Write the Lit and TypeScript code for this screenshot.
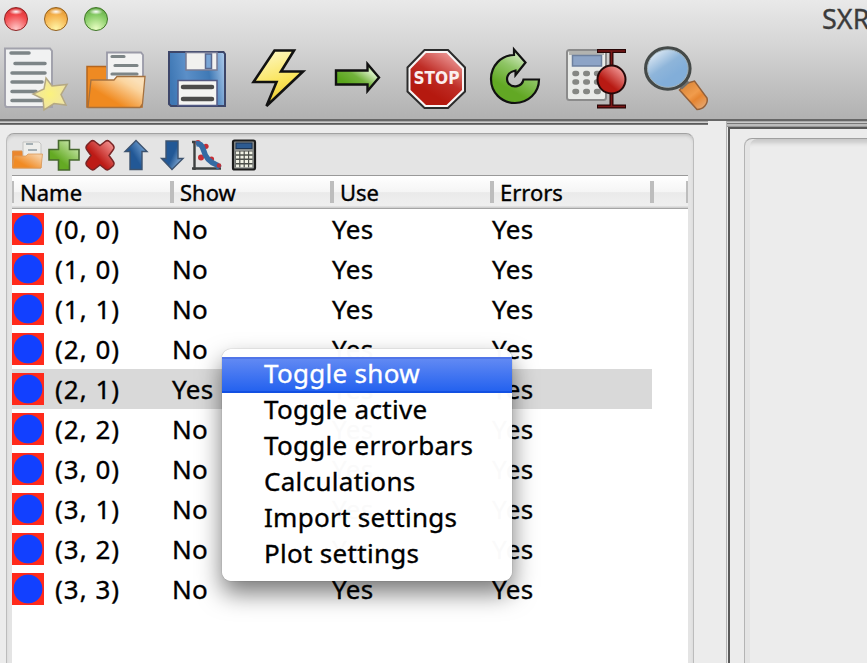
import { LitElement, html, css, svg } from "lit";
import { customElement } from "lit/decorators.js";

const ink = "#111";

// Toolbar glyphs share one coordinate space: slot n covers x from 80n to 80n+80, y from 40 to 116.
const toolIcons = [
  svg`<path d="M5 48.500H50L52 51V107H6L5 105Z" fill="#f1f2f2" stroke="#a2a2ac" stroke-width="2"/>
    <path d="M11 53H29M15 63.500H45M12 73H45M12 82H42M12 91.500H36M12 100.500H42" stroke="#7d8587" stroke-width="3.500" stroke-linecap="round"/>
    <path d="M46 78L52 86L67 84.500L61 94.500L66 105L54 103.500L44 110L43 99L33 94L44 89Z" fill="url(#star)" stroke="#b4a883" stroke-width="1.500"/>`,
  svg`<path d="M87 107V66.500H106L110 71H142V107Z" fill="#ee8a22" stroke="#b5651d" stroke-width="1.500"/>
    <path d="M107 52.500H141L143 55V92H107Z" fill="#f3f3f3" stroke="#9a9aa8" stroke-width="1.800"/>
    <path d="M112 56.500H124M115 65.500H137M112 74H137" stroke="#7d8587" stroke-width="3.200" stroke-linecap="round"/>
    <path d="M91 80H114L117 76.500H145L142.500 104L140 107.500H88Z" fill="url(#folder)" stroke="#a5713f" stroke-width="1.300"/>`,
  svg`<path d="M169 52H223.500L225 54V106H171L169 104Z" fill="url(#disk)" stroke="#3d4669" stroke-width="2"/>
    <rect x="186" y="52.500" width="31" height="17.500" fill="#f1f1ef" stroke="#777b94" stroke-width="1.500"/>
    <rect x="205.500" y="54" width="6" height="14.500" fill="#79a5d6" stroke="#59688e" stroke-width="1.500"/>
    <rect x="178" y="80.500" width="39" height="25" fill="#f4f4f2" stroke="#535a84" stroke-width="1.500"/>
    <path d="M183 87H212M183 99H212" stroke="#4c4c4b" stroke-width="4.500" stroke-linecap="round"/>`,
  svg`<path d="M274.500 50.500H294L281 71.500H303L266.500 106L276.500 82H253.500Z" fill="url(#bolt)" stroke="${ink}" stroke-width="2.600"/>`,
  svg`<path d="M336 70.500H367.500V64L379 77.500L367.500 91V84.500H336Z" fill="url(#greenH)" stroke="${ink}" stroke-width="2.400"/>`,
  svg`<path d="M424.500 50H448L465 67.500V91.500L448 108H424.500L407.500 91.500V67.500Z" fill="#f7f4f4" stroke="#2b2b2b" stroke-width="2"/>
    <path d="M426 53H446.500L462 69V90L446.500 105H426L410.500 90V69Z" fill="url(#stop)"/>
    <text x="436.500" y="84" class="stop" textLength="46" lengthAdjust="spacingAndGlyphs">STOP</text>`,
  svg`<path d="M514 49.500L525.500 62.500L515.500 75V70.500C508 72 505 78 508.500 83.500C513 88.500 522 87 523.500 79.500H539C539 93 528 103 515 103C501 103 491 92 491 79C491 66 501 55 514 55Z" fill="url(#green)" stroke="${ink}" stroke-width="2.200"/>`,
  svg`<rect x="567" y="50" width="39" height="50" rx="2.500" fill="#e9ebe8" stroke="#8b8b8b" stroke-width="2"/>
    <path d="M569 53H604" stroke="#b2b3b0" stroke-width="4"/>
    <rect x="572.500" y="55.500" width="29" height="10.500" fill="#8da4c6" stroke="#6d809e" stroke-width="1.500"/>
    <path d="M573 73.500H603M573 82H603M573 91.500H603" stroke="#858783" stroke-width="5.500" stroke-linecap="round" stroke-dasharray="1.500 9.300" transform="translate(2 0)"/>
    <path d="M597 51H626M611.500 51V107M597 106.500H626" stroke="#280707" stroke-width="4"/>
    <path d="M598 51H625M611.500 51V107M598 106.500H625" stroke="#7b1717" stroke-width="1.600"/>
    <circle cx="611.500" cy="79.500" r="14" fill="url(#ball)" stroke="#260909" stroke-width="2"/>`,
  svg`<path d="M686 83.500L694.500 81L707 98C708.500 104 703 109.500 697 109.500L679.500 90Z" fill="url(#handle)" stroke="#946039" stroke-width="1.500"/>
    <path d="M681 88.500L688.500 81.500" stroke="#70716f" stroke-width="3"/>
    <ellipse cx="667.800" cy="68.500" rx="22" ry="20.500" fill="url(#lens)" stroke="#454a49" stroke-width="3.600"/>
    <ellipse cx="667.800" cy="68.500" rx="20.300" ry="18.800" fill="none" stroke="#a3b4bd" stroke-width="1"/>`,
];

// Panel glyphs: slot n covers x from 10+36n, y from 137 to 173.
const panelIcons = [
  svg`<path d="M12.500 168V151H22L24 155H41V168Z" fill="#eb862d" stroke="#dc934f"/>
    <path d="M23 142H39L41 144V158H23Z" fill="#eeeeeb" stroke="#c4c4c2"/><path d="M26 144H33M28 150H37" stroke="#8d9ba1" stroke-width="1.500"/>
    <path d="M14.500 156H26L28 154H42.500L41 168H12.500Z" fill="url(#folderS)" stroke="#d99a5c" stroke-width=".8"/>`,
  svg`<path d="M58.500 140.500H69.500V149.500H79V160H69.500V170H58.500V160H49V149.500H58.500Z" fill="url(#greenP)" stroke="#47682f" stroke-width="1.600"/>`,
  svg`<path d="M90.500 141.500Q93 139.500 95.500 142L100 145.500L104.500 142Q107 139.500 109.500 141.500L113 145Q115 147.500 113 150L109 155.500L113 161Q115 163.500 113 166L109.500 169Q107 171 104.500 168.500L100 165L95.500 168.500Q93 171 90.500 169L87 166Q85 163.500 87 161L91 155.500L87 150Q85 147.500 87 145Z" fill="url(#redX)" stroke="#7a2525" stroke-width="1.500"/>`,
  svg`<path d="M136 140.500L147 151.500H142V169.500H130V151.500H125Z" fill="url(#blueUp)" stroke="#3d536f" stroke-width="1.400"/>`,
  svg`<path d="M172 169.500L161.500 158.500H166V141H178V158.500H183Z" fill="url(#blueDn)" stroke="#3d536f" stroke-width="1.400"/>`,
  svg`<path d="M194.500 141V170M192 168.500H221M192 142H197" fill="none" stroke="#3d4141" stroke-width="2.400"/>
    <g fill="#c62f35"><circle cx="206" cy="146.300" r="2.600"/><circle cx="201" cy="157.500" r="3"/><circle cx="211.500" cy="159" r="2.600"/><circle cx="198" cy="142.500" r="2.600"/></g>
    <path d="M196 144Q201.500 142.500 203.500 150Q206 161 217 165L219.500 168" fill="none" stroke="#356ba3" stroke-width="5.500"/>
    <circle cx="219" cy="165.500" r="2.300" fill="#b8313c"/>`,
  svg`<rect x="233" y="140.500" width="22" height="29" rx="1.500" fill="#8b8e8c" stroke="#1c1c1c" stroke-width="2.200"/>
    <rect x="236" y="143" width="16" height="5.500" fill="#2d5b91" stroke="#1c3554"/>
    <rect x="235.500" y="151" width="17" height="16" fill="#4c4f4a"/>
    <path d="M236 152.800H253M236 157.200H253M236 161.500H253M236 165.800H253" stroke="#f0f1e4" stroke-width="2.800" stroke-dasharray="3.200 1.200"/>`,
];

const stops = (...list: [number, string][]) =>
  list.map(([o, c]) => svg`<stop offset=${o} stop-color=${c} />`);

const gradients = svg`<defs>
  <radialGradient id="star">${stops([0, "#fbf27d"], [1, "#efe4a4"])}</radialGradient>
  <linearGradient id="folder" x1=".45" y1=".8" x2="1" y2=".3">${stops([0, "#f08a20"], [0.75, "#fbd5a0"], [1, "#fbe0b8"])}</linearGradient>
  <linearGradient id="folderS" x1=".4" y1=".8" x2="1" y2=".3">${stops([0, "#f18b24"], [1, "#f6cda0"])}</linearGradient>
  <linearGradient id="disk" x1="0" y1=".4" x2="1" y2=".25">${stops([0, "#3e77b4"], [0.3, "#5b8fc8"], [0.7, "#3f79b5"], [1, "#a5c5e8"])}</linearGradient>
  <linearGradient id="bolt" x1=".2" y1="0" x2=".5" y2="1">${stops([0, "#fdf8c8"], [0.6, "#fae45a"], [1, "#e8c52d"])}</linearGradient>
  <linearGradient id="greenH" x1=".3" y1=".8" x2=".95" y2=".2">${stops([0, "#5aa61c"], [0.4, "#73b33d"], [0.8, "#d4edc0"], [1, "#9ccc77"])}</linearGradient>
  <linearGradient id="stop" x1=".35" y1=".75" x2=".8" y2="0">${stops([0, "#b5190f"], [0.4, "#bf2d26"], [1, "#ee9b9a"])}</linearGradient>
  <linearGradient id="green" x1=".3" y1=".7" x2=".65" y2="0">${stops([0, "#62a824"], [0.5, "#8fc566"], [1, "#e3f3d7"])}</linearGradient>
  <linearGradient id="ball" x1=".4" y1=".65" x2=".85" y2=".1">${stops([0, "#b81a13"], [1, "#f29a98"])}</linearGradient>
  <linearGradient id="lens" x1=".15" y1=".1" x2=".6" y2=".7">${stops([0, "#e0ebf5"], [0.6, "#8eb5da"], [1, "#82aed9"])}</linearGradient>
  <linearGradient id="handle" x1=".1" y1=".2" x2=".7" y2="1">${stops([0, "#dc883b"], [0.45, "#f19c4c"], [0.65, "#e68531"], [1, "#e6a368"])}</linearGradient>
  <linearGradient id="greenP" x1=".4" y1=".7" x2=".9" y2=".1">${stops([0, "#64aa23"], [1, "#cbe8ae"])}</linearGradient>
  <linearGradient id="redX" x1=".4" y1=".6" x2=".9" y2=".1">${stops([0, "#bd1b16"], [1, "#f18d8b"])}</linearGradient>
  <linearGradient id="blueUp" x1=".4" y1=".5" x2=".9" y2=".1">${stops([0, "#225896"], [1, "#7aa8d8"])}</linearGradient>
  <linearGradient id="blueDn" x1=".4" y1=".7" x2=".9" y2="1">${stops([0, "#225896"], [1, "#a5c6e8"])}</linearGradient>
</defs>`;

const rows: [string, string][] = [
  ["(0, 0)", "No"], ["(1, 0)", "No"], ["(1, 1)", "No"], ["(2, 0)", "No"], ["(2, 1)", "Yes"],
  ["(2, 2)", "No"], ["(3, 0)", "No"], ["(3, 1)", "No"], ["(3, 2)", "No"], ["(3, 3)", "No"],
];
const menuItems = ["Toggle show", "Toggle active", "Toggle errorbars", "Calculations", "Import settings", "Plot settings"];

@customElement("app-root")
class AppRoot extends LitElement {
  static styles = css`
    :host { display: block; position: relative; width: 867px; height: 663px; overflow: hidden; background: #ececec; color: #000; font-family: "Noto Sans", "Open Sans", sans-serif; -webkit-text-stroke: 0.35px; }
    svg { display: block; flex: none; }
    .window { display: flex; flex-direction: column; height: 663px; }
    .chrome { box-sizing: border-box; flex: none; height: 121px; background: linear-gradient(#e9e9e9, #d5d5d5 38%, #b2b2b2 98%); border-bottom: 2px solid #666; }
    .titlebar { display: flex; align-items: center; height: 40px; padding-left: 4px; gap: 16px; }
    .light { box-sizing: border-box; flex: none; width: 24px; height: 24px; margin-bottom: 2px; border-radius: 50%; border: 1.500px solid; }
    .light.red { border-color: #8f2323; background: radial-gradient(ellipse 7px 3px at 50% 17%, #fff, #fff0), radial-gradient(circle at 50% 95%, #ffc9c9, #f1494c 60%, #c9292d); }
    .light.amber { border-color: #94601c; background: radial-gradient(ellipse 7px 3px at 50% 17%, #fff, #fff0), radial-gradient(circle at 50% 95%, #fff6a8, #f5b14b 60%, #cf8426); }
    .light.green { border-color: #3f7626; background: radial-gradient(ellipse 7px 3px at 50% 17%, #fff, #fff0), radial-gradient(circle at 50% 95%, #eaffc4, #85cb64 60%, #55993a); }
    .title { margin-left: 698px; margin-top: -2px; font-size: 27px; line-height: 40px; color: #3b3b3b; white-space: nowrap; }
    .tools { display: flex; }
    .stop { font: bold 17px "DejaVu Sans", sans-serif; fill: #fbeeee; stroke: none; text-anchor: middle; }
    .body { display: flex; flex: 1; min-height: 0; }
    .left { box-sizing: border-box; flex: none; width: 708px; border-top: 1px solid #aaa; padding: 0 14px 0 6px; background: linear-gradient(#cfcfcf 1px, #5a5a5a 1px 2px, #777 2px 3px, #ececec 3px); }
    .group { box-sizing: border-box; height: 560px; margin-top: 11px; padding: 0 5px; border: solid #bcbcbc; border-width: 1px 1px 0; border-top-color: #a2a2a2; border-radius: 8px 8px 0 0; background: #e4e4e4; box-shadow: inset 0 3px 3px -1px #c6c6c6; }
    .actions { display: flex; height: 36px; margin-left: -2px; padding: 3px 0 2px; }
    .list { height: 520px; background: #fff; border-top: 1px solid #999; }
    .head { display: grid; grid-template-columns: 158px 160px 160px 160px 36px 2px; box-sizing: border-box; height: 33px; border-bottom: 1px solid #a5a5a5; background: linear-gradient(#fff, #f5f5f5 49%, #eaeaea 52%, #efefef 92%, #c9c9c9); font-size: 22px; line-height: 33px; }
    .hcell { position: relative; white-space: nowrap; padding-left: 10px; }
    .hcell::before { content: ""; position: absolute; left: 0; top: 5px; width: 4px; height: 22px; background: #bdbdbd; }
    .hcell.first { padding-left: 8px; }
    .hcell.last { padding-left: 0; }
    .hcell.first::before, .hcell.last::before { width: 2px; }
    .row { display: grid; grid-template-columns: 42px 118px 160px 160px 160px; align-items: center; width: 640px; height: 40px; font-size: 26px; line-height: 40px; letter-spacing: 0.3px; white-space: nowrap; }
    .name { padding-left: 1px; letter-spacing: 1px; }
    .row.selected { background: #d9d9d9; }
    .swatch { width: 32px; height: 32px; background: radial-gradient(circle at 50% 50%, #1240ff 14px, #ff2a1b 14.800px); }
    .gutter { width: 18px; flex: none; }
    .right { box-sizing: border-box; flex: 1; padding: 10px 0 0 15px; border-left: 1px solid #b4b4b4; background: linear-gradient(#aaa 1px, #c9c9c9 1px 2px, #777 2px 3px, #bbb 3px 5px, #999 5px 6px, #0000 6px); }
    .frame { box-sizing: border-box; margin: -4px 0 0 -14px; padding: 9px 0 0 13px; width: 141px; height: 537px; border: solid #595959; border-width: 2px 0 0 2px; }
    .canvas { height: 540px; width: 140px; margin-left: 1px; border: solid #b4b4b4; border-width: 1px 0 0 1px; border-top-color: #a0a0a0; border-radius: 8px 0 0; box-shadow: inset 5px 0 0 #e4e4e4, inset 0 6px 4px -2px #c8c8c8; }
    .menu { position: absolute; left: 222px; top: 349px; box-sizing: border-box; width: 290px; height: 232px; padding-top: 8px; border-radius: 9px; background: #fffffffa; box-shadow: 0 0 1px #0008, 0 12px 24px #0008; font-size: 26px; line-height: 32px; letter-spacing: 0.3px; }
    .item { box-sizing: border-box; height: 36px; padding-left: 42px; white-space: nowrap; }
    .item.active { color: #fff; background: linear-gradient(#5075e8 2px, #6189f3 2px, #2462ef 34px, #1250e2 34px); }
  `;

  private tool(shape: unknown, i: number) {
    return html`<svg width="80" height="76" viewBox="${80 * i} 40 80 76">${gradients}${shape}</svg>`;
  }

  private action(shape: unknown, i: number) {
    return html`<svg width="36" height="36" viewBox="${10 + 36 * i} 137 36 36">${gradients}${shape}</svg>`;
  }

  render() {
    return html`
      <div class="window">
        <header class="chrome">
          <div class="titlebar">
            <span class="light red"></span><span class="light amber"></span><span class="light green"></span>
            <span class="title">SXR</span>
          </div>
          <div class="tools">${toolIcons.map((s, i) => this.tool(s, i))}</div>
        </header>
        <main class="body">
          <section class="left">
            <div class="group">
              <div class="actions">${panelIcons.map((s, i) => this.action(s, i))}</div>
              <div class="list">
                <div class="head">
                  <span class="hcell first">Name</span><span class="hcell">Show</span><span class="hcell">Use</span>
                  <span class="hcell">Errors</span><span class="hcell"></span><span class="hcell last"></span>
                </div>
                ${rows.map(([name, show]) => html`
                  <div class="row ${name === "(2, 1)" ? "selected" : ""}">
                    <span class="swatch"></span><span class="name">${name}</span><span>${show}</span><span>Yes</span><span>Yes</span>
                  </div>`)}
              </div>
            </div>
          </section>
          <div class="gutter"></div>
          <section class="right"><div class="frame"><div class="canvas"></div></div></section>
        </main>
      </div>
      <div class="menu">
        ${menuItems.map((t, i) => html`<div class="item ${i === 0 ? "active" : ""}">${t}</div>`)}
      </div>`;
  }
}
